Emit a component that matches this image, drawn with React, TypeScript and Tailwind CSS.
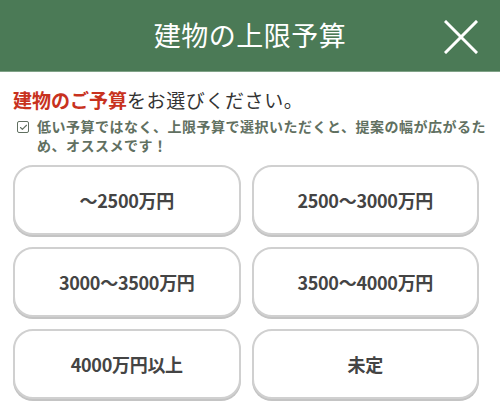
import { Check } from 'lucide-react';

const options = [
  '～2500万円',
  '2500～3000万円',
  '3000～3500万円',
  '3500～4000万円',
  '4000万円以上',
  '未定',
];

export default function App() {
  return (
    <div
      className="w-[500px] h-[419px] bg-white overflow-hidden"
      style={{ fontFamily: '"Noto Sans CJK JP", "Noto Sans", sans-serif' }}
    >
      <header className="relative h-[72px] bg-[#4b7a56] border-b border-[#7fa287] flex items-center justify-center">
        <h1 className="text-[27px] text-white tracking-[0.5px]">建物の上限予算</h1>
        <button className="absolute right-[22px] top-[20px] w-[34px] h-[34px]">
          <svg viewBox="0 0 34 34" className="w-full h-full" fill="none" stroke="white" strokeWidth="3" strokeLinecap="square">
            <line x1="2" y1="2" x2="32" y2="32" />
            <line x1="32" y1="2" x2="2" y2="32" />
          </svg>
        </button>
      </header>

      <div className="px-[13px] pt-[16px]">
        <p className="text-[19px] leading-[24px] text-[#333]">
          <span className="text-[#c8321e] font-bold">建物のご予算</span>
          <span className="tracking-[0.6px]">をお選びください。</span>
        </p>
        <div className="mt-[5px] grid grid-cols-[24px_1fr] text-[14px] leading-[19px] font-bold text-[#617061] tracking-[0.5px]">
          <div className="pt-[4px] pl-[4px]">
            <div className="w-[12px] h-[12px] border border-[#617061] rounded-[2px] flex items-center justify-center">
              <Check size={9} strokeWidth={3} />
            </div>
          </div>
          <p className="min-w-0">低い予算ではなく、上限予算で選択いただくと、提案の幅が広がるため、オススメです！</p>
        </div>

        <div className="mt-[10px] grid grid-cols-2 gap-x-[11px] gap-y-[12px] pr-[8px]">
          {options.map((label) => (
            <button
              key={label}
              className="h-[70px] rounded-[20px] border-2 border-[#d0d0d0] bg-white shadow-[0_2px_0_#c4c4c4] flex items-center justify-center text-[18px] font-bold text-[#444] tracking-[-0.3px]"
            >
              {label}
            </button>
          ))}
        </div>
      </div>
    </div>
  );
}
